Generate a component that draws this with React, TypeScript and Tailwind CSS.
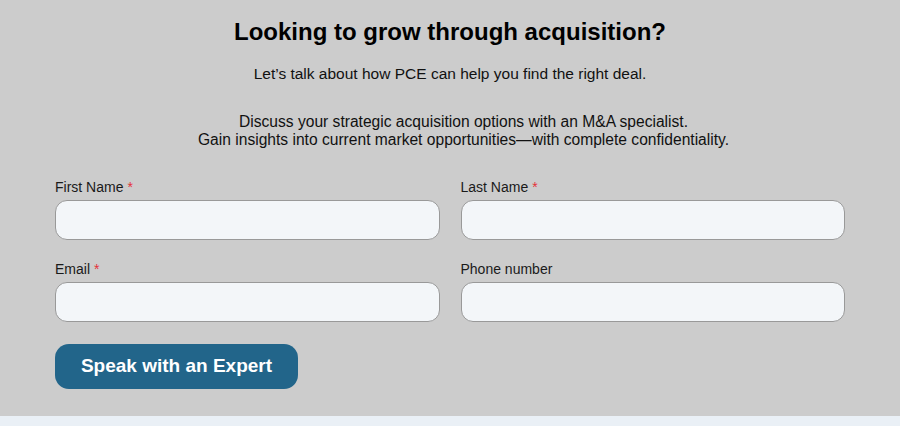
import React from "react";

function Field({ label, required }: { label: string; required?: boolean }) {
  return (
    <div className="flex flex-col">
      <label className="text-[14px] leading-[16px] text-[#1a1a1a] h-[16px] mb-[5px]">
        {label}
        {required && <span className="text-[#e5323a] ml-[4px]">*</span>}
      </label>
      <input className="h-[40px] w-full rounded-[12px] border border-[#999999] bg-[#f3f6f9] px-3 outline-none" />
    </div>
  );
}

export default function App() {
  return (
    <div className="w-[900px] h-[426px] flex flex-col" style={{ fontFamily: '"Liberation Sans", Arial, sans-serif' }}>
      <div className="h-[416px] bg-[#cccccc] flex flex-col items-center pt-[18px]">
        <h1 className="text-[24px] leading-[28px] font-bold text-black">Looking to grow through acquisition?</h1>
        <p className="mt-[19px] text-[15.5px] leading-[18px] text-[#111]">Let’s talk about how PCE can help you find the right deal.</p>
        <p className="mt-[30px] pl-[27px] text-[15.6px] leading-[18px] text-[#111] text-center">
          Discuss your strategic acquisition options with an M&amp;A specialist.
          <br />
          Gain insights into current market opportunities—with complete confidentiality.
        </p>
        <div className="w-[790px] mt-[30px] grid grid-cols-2 gap-x-[21px] gap-y-[21px]">
          <Field label="First Name" required />
          <Field label="Last Name" required />
          <Field label="Email" required />
          <Field label="Phone number" />
        </div>
        <div className="w-[790px] mt-[22px]">
          <button className="h-[45px] w-[243px] rounded-[14px] bg-[#22658a] text-white font-bold text-[19px]">
            Speak with an Expert
          </button>
        </div>
      </div>
      <div className="flex-1 bg-[#eaf0f6]" />
    </div>
  );
}
